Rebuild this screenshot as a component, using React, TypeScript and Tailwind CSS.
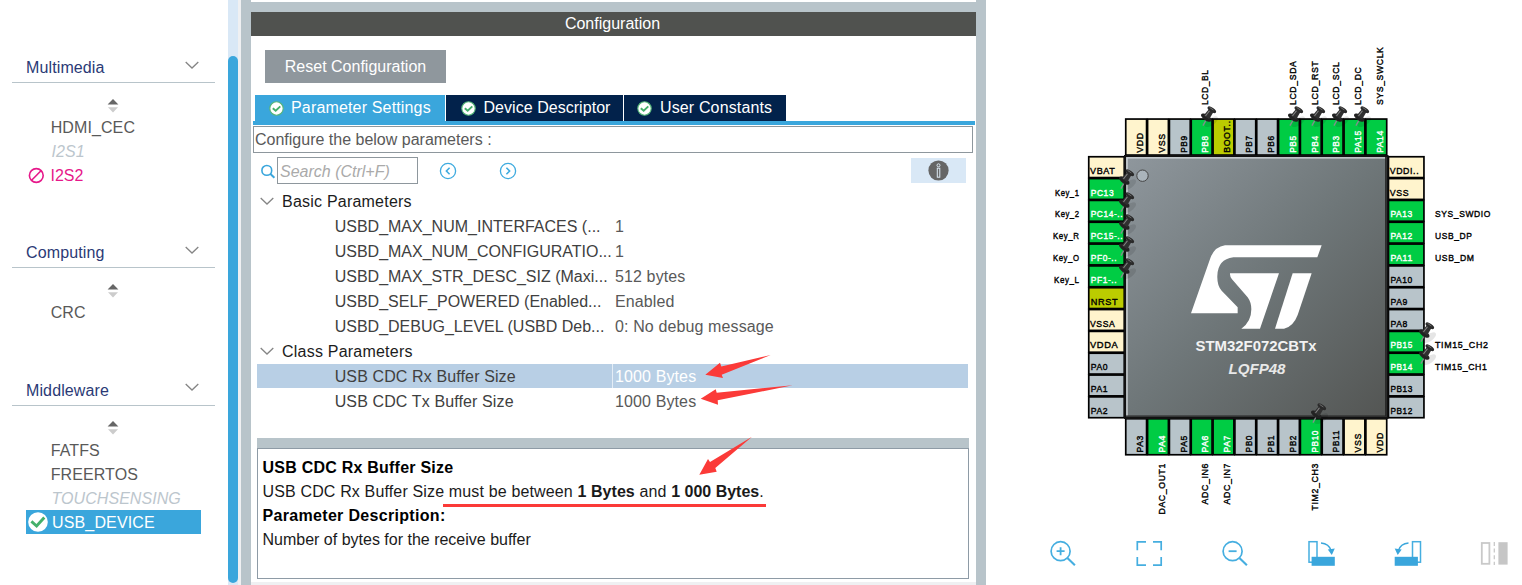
import React from "react";

/* ---------- sidebar ---------- */

function Chevron() {
  return (
    <svg width="14" height="9" viewBox="0 0 14 9" fill="none" stroke="#858585" strokeWidth="1.3">
      <path d="M0.7 1 L7 7 L13.3 1" />
    </svg>
  );
}

function SortIcon() {
  return (
    <svg width="12" height="14" viewBox="0 0 12 14" className="mx-auto">
      <path d="M6 0 L11.4 5.6 H0.6 Z" fill="#666" />
      <path d="M6 13.4 L11 8.2 H1 Z" fill="#ccc" />
    </svg>
  );
}

type Status = "normal" | "disabled" | "conflict" | "active";
type Item = { name: string; status: Status };

function SidebarItem({ item }: { item: Item }) {
  if (item.status === "active") {
    return (
      <li className="ml-[26px] flex h-6 w-[175px] items-center bg-[#3aa6dc] text-white">
        <svg width="20" height="20" viewBox="0 0 20 20" className="ml-[1.5px]">
          <circle cx="10" cy="10" r="9.8" fill="#fff" />
          <path d="M3.4 9.4 L8.6 14 L16.3 5.6" fill="none" stroke="#45b06b" strokeWidth="2.9" />
        </svg>
        <span className="ml-[4.5px] pt-0.5 tracking-[0.15px]">{item.name}</span>
      </li>
    );
  }
  if (item.status === "conflict") {
    return (
      <li className="flex h-6 items-center pl-[28px] text-[#e6188a]">
        <svg width="17" height="17" viewBox="0 0 17 17" fill="none" stroke="#e6188a" strokeWidth="1.6">
          <circle cx="8.3" cy="8.5" r="6.9" />
          <path d="M3.6 13.2 L13 3.8" />
        </svg>
        <span className="ml-[5.5px] pt-0.5">{item.name}</span>
      </li>
    );
  }
  if (item.status === "disabled") {
    return <li className="h-6 pt-px pl-[51.5px] leading-6 tracking-[0.06px] text-[#bcc6cd] italic">{item.name}</li>;
  }
  return <li className="h-6 pt-px pl-[50.7px] leading-6 tracking-[0.1px] text-[#595959]">{item.name}</li>;
}

function Section({ title, items, className }: { title: string; items: Item[]; className: string }) {
  return (
    <section className={className}>
      <header className="ml-3 flex h-[33px] w-[203px] items-center justify-between border-b border-[#b8c4ca] pr-4 pl-3.5 text-[#2b3a76]">
        <span className="pt-1 tracking-[0.12px]">{title}</span>
        <span className="pb-0.5">
          <Chevron />
        </span>
      </header>
      <div className="flex h-8 w-[226px] items-center pt-[13px]">
        <SortIcon />
      </div>
      <ul>
        {items.map((i) => (
          <SidebarItem key={i.name} item={i} />
        ))}
      </ul>
    </section>
  );
}

function Sidebar() {
  return (
    <aside className="flex h-full w-[241px] shrink-0">
      <div className="w-[227px] pt-[50px]">
        <Section
          title="Multimedia"
          className="h-[185px]"
          items={[
            { name: "HDMI_CEC", status: "normal" },
            { name: "I2S1", status: "disabled" },
            { name: "I2S2", status: "conflict" },
          ]}
        />
        <Section title="Computing" className="h-[137.5px]" items={[{ name: "CRC", status: "normal" }]} />
        <Section
          title="Middleware"
          className=""
          items={[
            { name: "FATFS", status: "normal" },
            { name: "FREERTOS", status: "normal" },
            { name: "TOUCHSENSING", status: "disabled" },
            { name: "USB_DEVICE", status: "active" },
          ]}
        />
      </div>
      <div className="ml-px h-full w-[10px] bg-[#d9e8f6] pt-14">
        <div className="h-[527px] rounded-full bg-[#3aa6dc]" />
      </div>
      <div className="w-[3px] bg-[#eff0f2]" />
    </aside>
  );
}

/* ---------- configuration panel ---------- */

function TabCheck() {
  return (
    <svg width="15" height="15" viewBox="0 0 15 15">
      <circle cx="7.5" cy="7.5" r="6.7" fill="#fff" stroke="#55b578" strokeWidth="1.1" />
      <path d="M3.8 7.2 L6.7 9.8 L11.3 5.4" fill="none" stroke="#45b06b" strokeWidth="1.9" />
    </svg>
  );
}

const basicParams = [
  ["USBD_MAX_NUM_INTERFACES (...", "1"],
  ["USBD_MAX_NUM_CONFIGURATIO...", "1"],
  ["USBD_MAX_STR_DESC_SIZ (Maxi...", "512 bytes"],
  ["USBD_SELF_POWERED (Enabled...", "Enabled"],
  ["USBD_DEBUG_LEVEL (USBD Deb...", "0: No debug message"],
];

function Group({ title }: { title: string }) {
  return (
    <div className="flex h-[25px] items-center pl-[3px] text-[#1c1c1c]">
      <Chevron />
      <span className="ml-2 tracking-[0.22px]">{title}</span>
    </div>
  );
}

function Param({ name, value, selected }: { name: string; value: string; selected?: boolean }) {
  return (
    <div className="h-[25px]">
      <div className={selected ? "flex h-6 items-center bg-[#b8cfe5]" : "flex h-6 items-center"}>
        <span
          className={
            name.startsWith("USBD")
              ? "w-[355px] pt-0.5 pl-[77.7px] whitespace-nowrap text-[#404040]"
              : "w-[355px] pt-0.5 pl-[77.7px] tracking-[0.12px] whitespace-nowrap text-[#404040]"
          }
        >
          {name}
        </span>
        <span
          className={
            selected
              ? "flex h-full items-center border-l border-[#e4edf6] pt-0.5 pl-[2px] tracking-[0.12px] text-white"
              : "flex h-full items-center pt-0.5 pl-[3px] tracking-[0.12px] text-[#595959]"
          }
        >
          {value}
        </span>
      </div>
    </div>
  );
}

function Arrows() {
  return (
    <svg width="140" height="160" viewBox="680 350 140 160" className="absolute top-[350px] left-[429px] overflow-visible" fill="#fb3a38">
      <path d="M705.3 374.8 L720 362.8 L721.3 366.5 L770.7 355 L721.7 374.8 L723 378Z" />
      <path d="M700.7 398.7 L715.7 389.3 L716.7 392.7 L792.7 385.3 L717.7 400.3 L718 404.7Z" />
      <path d="M699.3 474.7 L708 459 L710 462 L752 436.7 L715.3 468 L716.7 471.7Z" />
      <rect x="443" y="504" width="323" height="3" />
    </svg>
  );
}

function NavCircle({ d }: { d: string }) {
  return (
    <svg width="18" height="18" viewBox="0 0 18 18" fill="none" stroke="#3fabdf">
      <circle cx="9" cy="9" r="7.6" strokeWidth="1.3" />
      <path d={d} strokeWidth="1.6" />
    </svg>
  );
}

function ConfigurationPanel() {
  return (
    <main className="relative flex h-full w-[745px] shrink-0 flex-col border-x-10 border-[#b8c4ca] bg-white">
      <div className="h-[2px] shrink-0" />
      <div className="h-[10px] shrink-0 bg-[#b8c4ca]" />
      <h1 className="h-6 shrink-0 bg-[#50524f] pr-0.5 text-center leading-[24px] text-white">Configuration</h1>
      <button className="mt-[14px] ml-[14px] h-[33px] w-[181px] shrink-0 bg-[#8f979d] text-white">Reset Configuration</button>

      <nav className="mt-3 ml-0.5 flex h-[30px] w-[722px] shrink-0 gap-[1px] border-b-4 border-[#3aa6dc] pl-0.5 text-white">
        <div className="flex w-[190px] items-center bg-[#3aa6dc] pl-[14px]">
          <TabCheck />
          <span className="ml-[7px] tracking-[0.16px]">Parameter Settings</span>
        </div>
        <div className="flex w-[177px] items-center bg-[#02224b] pl-[15px]">
          <TabCheck />
          <span className="ml-[7.5px] tracking-[0.04px]">Device Descriptor</span>
        </div>
        <div className="flex w-[162px] items-center bg-[#02224b] pl-[13px]">
          <TabCheck />
          <span className="ml-2 tracking-[0.14px]">User Constants</span>
        </div>
      </nav>

      <div className="mt-px ml-0.5 h-[27px] w-[720px] shrink-0 border border-[#8e979d] leading-[25px] text-[#595959]">
        <span className="pl-px">Configure the below parameters :</span>
      </div>

      <div className="mt-px mr-1 flex h-[33px] shrink-0 items-center pl-[8.5px]">
        <svg width="16" height="16" viewBox="0 0 16 16" fill="none" stroke="#3aa6dc">
          <circle cx="6.8" cy="7.4" r="4.9" strokeWidth="1.6" />
          <path d="M10.2 10.8 L14.4 14.8" strokeWidth="2" />
        </svg>
        <div className="ml-[1.5px] h-[27px] w-[141px] border border-[#8e979d] pl-0.5 leading-[27px] text-[#aaa] italic">Search (Ctrl+F)</div>
        <span className="ml-[20.5px]">
          <NavCircle d="M10.6 5.8 L7.4 9 L10.6 12.2" />
        </span>
        <span className="ml-[42px]">
          <NavCircle d="M7.4 5.8 L10.6 9 L7.4 12.2" />
        </span>
        <div className="mr-[6px] ml-auto flex h-[25px] w-[55px] items-center justify-center bg-[#d9e8f6]">
          <svg width="21" height="21" viewBox="0 0 21 21">
            <circle cx="10.5" cy="10.5" r="10.1" fill="#666" />
            <circle cx="10.5" cy="5.3" r="1.5" fill="#666" stroke="#dce9f3" />
            <rect x="9.3" y="8.2" width="2.5" height="9" fill="#666" stroke="#dce9f3" />
          </svg>
        </div>
      </div>

      <div className="mt-[2px] mb-px ml-[6px] h-[248px] w-[711px] shrink-0">
        <Group title="Basic Parameters" />
        {basicParams.map(([n, v]) => (
          <Param key={n} name={n} value={v} />
        ))}
        <Group title="Class Parameters" />
        <Param name="USB CDC Rx Buffer Size" value="1000 Bytes" selected />
        <Param name="USB CDC Tx Buffer Size" value="1000 Bytes" />
      </div>

      <div className="ml-[6px] h-[10px] w-[712px] shrink-0 bg-[#b8c4ca]" />
      <div className="ml-[6px] h-[131px] w-[712px] shrink-0 border border-[#8e9ba6] pt-[7px] pl-[4.5px] leading-6 text-[#1a1a1a]">
        <p className="font-bold tracking-[0.23px] text-black">USB CDC Rx Buffer Size</p>
        <p className="tracking-[0.15px]">
          USB CDC Rx Buffer Size must be between <b className="tracking-[0.05px]">1 Bytes</b> and{" "}
          <b className="tracking-normal">1 000 Bytes</b>.
        </p>
        <p className="font-bold tracking-[0.32px] text-black">Parameter Description:</p>
        <p>Number of bytes for the receive buffer</p>
      </div>
      <div className="mt-[3px] h-[3px] shrink-0 bg-[#eff0f2]" />
      <Arrows />
    </main>
  );
}

/* ---------- chip pinout ---------- */

type Pin = { n: string; w: number; k: "p" | "g" | "f" | "r"; label?: string; lw?: number };
const FILL = { p: "#fff4cd", g: "#b8c4ca", f: "#00cc44", r: "#bbcc00" };

const left: Pin[] = [
  { n: "VBAT", w: 25, k: "p" },
  { n: "PC13", w: 23, k: "f", label: "Key_1", lw: 24 },
  { n: "PC14-..", w: 32, k: "f", label: "Key_2", lw: 24 },
  { n: "PC15-..", w: 32, k: "f", label: "Key_R", lw: 26 },
  { n: "PF0-..", w: 26, k: "f", label: "Key_O", lw: 26 },
  { n: "PF1-..", w: 26, k: "f", label: "Key_L", lw: 25 },
  { n: "NRST", w: 27, k: "r" },
  { n: "VSSA", w: 25, k: "p" },
  { n: "VDDA", w: 28, k: "p" },
  { n: "PA0", w: 17, k: "g" },
  { n: "PA1", w: 17, k: "g" },
  { n: "PA2", w: 17, k: "g" },
];
const right: Pin[] = [
  { n: "VDDI..", w: 29, k: "p" },
  { n: "VSS", w: 19, k: "p" },
  { n: "PA13", w: 22, k: "f", label: "SYS_SWDIO", lw: 55.5 },
  { n: "PA12", w: 22, k: "f", label: "USB_DP", lw: 37 },
  { n: "PA11", w: 22, k: "f", label: "USB_DM", lw: 39 },
  { n: "PA10", w: 22, k: "g" },
  { n: "PA9", w: 17, k: "g" },
  { n: "PA8", w: 17, k: "g" },
  { n: "PB15", w: 22, k: "f", label: "TIM15_CH2", lw: 53 },
  { n: "PB14", w: 22, k: "f", label: "TIM15_CH1", lw: 52 },
  { n: "PB13", w: 22, k: "g" },
  { n: "PB12", w: 22, k: "g" },
];
const top: Pin[] = [
  { n: "VDD", w: 20, k: "p" },
  { n: "VSS", w: 19, k: "p" },
  { n: "PB9", w: 17, k: "g" },
  { n: "PB8", w: 17, k: "f", label: "LCD_BL", lw: 35 },
  { n: "BOOT..", w: 32, k: "r" },
  { n: "PB7", w: 17, k: "g" },
  { n: "PB6", w: 17, k: "g" },
  { n: "PB5", w: 17, k: "f", label: "LCD_SDA", lw: 44 },
  { n: "PB4", w: 17, k: "f", label: "LCD_RST", lw: 44 },
  { n: "PB3", w: 17, k: "f", label: "LCD_SCL", lw: 43 },
  { n: "PA15", w: 22, k: "f", label: "LCD_DC", lw: 38 },
  { n: "PA14", w: 22, k: "f", label: "SYS_SWCLK", lw: 58 },
];
const bottom: Pin[] = [
  { n: "PA3", w: 17, k: "g" },
  { n: "PA4", w: 17, k: "f", label: "DAC_OUT1", lw: 51 },
  { n: "PA5", w: 17, k: "g" },
  { n: "PA6", w: 17, k: "f", label: "ADC_IN6", lw: 41 },
  { n: "PA7", w: 17, k: "f", label: "ADC_IN7", lw: 41 },
  { n: "PB0", w: 17, k: "g" },
  { n: "PB1", w: 17, k: "g" },
  { n: "PB2", w: 17, k: "g" },
  { n: "PB10", w: 22, k: "f", label: "TIM2_CH3", lw: 47 },
  { n: "PB11", w: 22, k: "g" },
  { n: "VSS", w: 19, k: "p" },
  { n: "VDD", w: 20, k: "p" },
];

const PITCH = 21.83;

function PinText({ x, y, w, dark, children, vertical }: { x: number; y: number; w: number; dark: boolean; children: string; vertical?: boolean }) {
  return (
    <text
      transform={vertical ? `translate(${x} ${y}) rotate(-90)` : `translate(${x} ${y})`}
      textLength={w}
      lengthAdjust="spacingAndGlyphs"
      fill={dark ? "#000" : "#fff"}
      stroke={dark ? "#000" : "#fff"}
      strokeWidth="0.4"
      letterSpacing="0.7"
    >
      {children}
    </text>
  );
}

function SidePins({ pins, x, side }: { pins: Pin[]; x: number; side: "l" | "r" }) {
  return (
    <g>
      {pins.map((p, i) => {
        const y = 156 + i * PITCH;
        const base = Math.round(y + PITCH - 4);
        return (
          <g key={i}>
            <rect x={x + 0.75} y={y + 0.75} width={35.5} height={PITCH - 1} fill={FILL[p.k]} stroke="#000" strokeWidth="1.7" />
            <PinText x={x + (p.n[0] === "V" ? 2 : 2.7)} y={base} w={p.w + 0.5} dark={p.k !== "f"}>{p.n}</PinText>
            {p.label && (
              <PinText x={side === "l" ? 1079 - p.lw! : 1435} y={base} w={p.lw! + 0.5} dark>{p.label}</PinText>
            )}
          </g>
        );
      })}
    </g>
  );
}

function EndPins({ pins, y, side }: { pins: Pin[]; y: number; side: "t" | "b" }) {
  return (
    <g>
      {pins.map((p, i) => {
        const x = 1125 + i * PITCH;
        const base = Math.round(x + 18);
        return (
          <g key={i}>
            <rect x={x + 0.75} y={y + 0.75} width={PITCH - 1} height={36} fill={FILL[p.k]} stroke="#000" strokeWidth="1.7" />
            <PinText x={base} y={y + 34.5} w={p.w + 0.5} dark={p.k !== "f"} vertical>{p.n}</PinText>
            {p.label && (
              <PinText x={base} y={side === "t" ? 105 : 463.5 + p.lw!} w={p.lw! + 0.5} dark vertical>{p.label}</PinText>
            )}
          </g>
        );
      })}
    </g>
  );
}

const tacks = [
  [1208, 115], [1295, 115], [1317, 115], [1339, 115], [1361, 115],
  [1126, 178], [1126, 201], [1126, 223], [1126, 245], [1126, 267],
  [1426, 331], [1426, 353], [1318, 412],
];

function Tack({ x, y }: { x: number; y: number }) {
  return (
    <g transform={`translate(${x} ${y}) scale(1.12)`}>
      <ellipse cx="3" cy="6" rx="7" ry="3.2" transform="rotate(-35 3 6)" fill="#000" opacity="0.1" />
      <path d="M-1.5 4 L-4.5 9.5" stroke="#858b8d" strokeWidth="1.2" />
      <g transform="rotate(34)">
        <ellipse cx="0" cy="2.8" rx="5.4" ry="2.5" fill="#222" />
        <path d="M-2.3 -5 H2.5 L3 2.5 H-3Z" fill="#303030" />
        <path d="M-1 -4.5 L-1.4 2" stroke="#888" strokeWidth="0.9" />
        <ellipse cx="0.2" cy="-5.8" rx="4.4" ry="1.9" fill="#2a2a2a" />
        <path d="M-2.6 -6.4 H1.5" stroke="#777" strokeWidth="0.7" />
      </g>
    </g>
  );
}

function Chip() {
  return (
    <svg
      width="536"
      height="530"
      viewBox="986 0 536 530"
      className="block"
      fontFamily="'Liberation Sans', Arial, sans-serif"
      fontSize="9.8"
    >
      <defs>
        <linearGradient id="body" x1="0" y1="0" x2="1" y2="1">
          <stop offset="0" stopColor="#8f979d" />
          <stop offset="0.5" stopColor="#6e7678" />
          <stop offset="1" stopColor="#535553" />
        </linearGradient>
      </defs>
      <SidePins pins={left} x={1088} side="l" />
      <SidePins pins={right} x={1387.7} side="r" />
      <EndPins pins={top} y={118.3} side="t" />
      <EndPins pins={bottom} y={418} side="b" />
      <rect x="1125" y="156" width="262.5" height="262" fill="url(#body)" stroke="#111" strokeWidth="2" />
      <path d="M1127 416 V157.8 H1385.5" fill="none" stroke="#d5dadd" strokeWidth="1.3" />
      <path d="M1126 416.2 H1385.8 V157" fill="none" stroke="#222" strokeWidth="1.3" />
      <circle cx="1142.5" cy="175.7" r="5.7" fill="#aab4bb" stroke="#444" strokeWidth="1" />
      <g transform="translate(1180 230) scale(0.3333)" fill="#fff">
        <path d="M33 250 L92 82 Q105 50 135 46 H425 L412 82 H160 Q113 88 112 138 Q111 167 125 182 L173 232 V250Z" />
        <path d="M150 130 H297 L240 296 H184 Q214 276 214 238 Q214 217 203 202 L156 148 Q149 139 150 130Z" />
        <path d="M338 130 H395 L353 255 Q340 290 312 296 H285Z" />
      </g>
      <g fontSize="14.8" fontWeight="bold">
        <text x="1195.5" y="350.5" textLength="121" lengthAdjust="spacingAndGlyphs" fill="#f2f2f2">STM32F072CBTx</text>
        <text x="1228.5" y="374" fontStyle="italic" textLength="57" lengthAdjust="spacingAndGlyphs" fill="#e8e8e8">LQFP48</text>
      </g>
      {tacks.map(([x, y]) => (
        <Tack key={`${x}-${y}`} x={x} y={y} />
      ))}
    </svg>
  );
}

function Magnifier({ plus }: { plus?: boolean }) {
  return (
    <svg width="28" height="28" viewBox="0 0 28 28" fill="none" stroke="#45aee0">
      <circle cx="10.6" cy="11.2" r="9.5" strokeWidth="1.7" />
      <path d="M17.4 18 L24.9 25.2" strokeWidth="2.1" />
      <path d={plus ? "M6.6 11.2 H14.6 M10.6 7.2 V15.2" : "M6.6 11.2 H14.6"} strokeWidth="1.8" />
    </svg>
  );
}

function RotateIcon({ flip }: { flip?: boolean }) {
  return (
    <svg width="28" height="28" viewBox="0 0 28 28">
      <g transform={flip ? "translate(27.5 0) scale(-1 1)" : undefined}>
        <rect x="1" y="1.7" width="8" height="20.5" fill="none" stroke="#45aee0" strokeWidth="1.5" />
        <rect x="3.6" y="16.8" width="23.2" height="9" fill="#3aa6dc" />
        <path d="M13 3 Q21 3.5 23.3 11" fill="none" stroke="#3aa6dc" strokeWidth="1.5" />
        <path d="M19.8 9.5 L26.8 8.5 L23.8 15Z" fill="#3aa6dc" />
      </g>
    </svg>
  );
}

function PinoutView() {
  return (
    <section className="flex h-full w-[536px] shrink-0 flex-col bg-white">
      <Chip />
      <div className="flex gap-[58px] pt-[10px] pl-[63.5px]">
        <Magnifier plus />
        <svg width="28" height="28" viewBox="0 0 28 28" fill="none" stroke="#45aee0" strokeWidth="1.7">
          <path d="M1.3 10.3 V1.9 H10 M17 1.9 H25.2 V10.3 M25.2 17 V25.2 H17 M10 25.2 H1.3 V17" />
        </svg>
        <Magnifier />
        <RotateIcon />
        <RotateIcon flip />
        <svg width="28" height="28" viewBox="0 0 28 28">
          <rect x="1.8" y="3" width="7.6" height="20.8" fill="none" stroke="#c9c9c9" strokeWidth="1.8" />
          <path d="M14.3 2 V25" stroke="#c9c9c9" strokeWidth="1.3" strokeDasharray="4 2.6" />
          <rect x="18.4" y="2.2" width="9.2" height="22.4" fill="#c6c6c6" />
        </svg>
      </div>
    </section>
  );
}

export default function App() {
  return (
    <div className="flex h-[585px] w-[1522px] overflow-hidden bg-white font-['Liberation_Sans',Arial,sans-serif] text-base">
      <Sidebar />
      <ConfigurationPanel />
      <PinoutView />
    </div>
  );
}
